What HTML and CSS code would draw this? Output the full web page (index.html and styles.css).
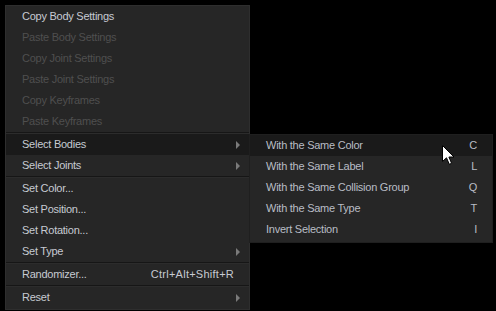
FILE: index.html
```html
<!DOCTYPE html>
<html lang="en">
<head>
  <meta charset="UTF-8" />
  <title>Context Menu</title>
  <link rel="stylesheet" href="styles.css">
</head>
<body>
  <div class="stage">
    <div class="menu main-menu">
      <div class="item">Copy Body Settings</div>
      <div class="item disabled">Paste Body Settings</div>
      <div class="item disabled">Copy Joint Settings</div>
      <div class="item disabled">Paste Joint Settings</div>
      <div class="item disabled">Copy Keyframes</div>
      <div class="item disabled">Paste Keyframes</div>
      <div class="sep"></div>
      <div class="item active has-sub">Select Bodies</div>
      <div class="item has-sub">Select Joints</div>
      <div class="sep"></div>
      <div class="item">Set Color...</div>
      <div class="item">Set Position...</div>
      <div class="item">Set Rotation...</div>
      <div class="item has-sub">Set Type</div>
      <div class="sep"></div>
      <div class="item"><span>Randomizer...</span><span class="key wide">Ctrl+Alt+Shift+R</span></div>
      <div class="sep"></div>
      <div class="item has-sub">Reset</div>
    </div>

    <div class="menu sub-menu">
      <div class="item active"><span>With the Same Color</span><span class="key">C</span></div>
      <div class="item"><span>With the Same Label</span><span class="key">L</span></div>
      <div class="item"><span>With the Same Collision Group</span><span class="key">Q</span></div>
      <div class="item"><span>With the Same Type</span><span class="key">T</span></div>
      <div class="item"><span>Invert Selection</span><span class="key">I</span></div>
    </div>

    <svg class="cursor" width="13" height="20" viewBox="0 0 13 20">
      <path d="M0.5 0.5 L0.5 16.5 L4.5 12.8 L7.3 19.3 L9.6 18.3 L6.9 12 L12 12 Z" fill="#fff" stroke="#000" stroke-width="1"/>
    </svg>
  </div>
</body>
</html>
```

FILE: styles.css
```css
body {
  margin: 0;
  background: #000;
  font-family: Tahoma, "Liberation Sans", Arial, sans-serif;
  font-size: 11px;
  letter-spacing: -0.25px;
}
.stage {
  position: relative;
  width: 496px;
  height: 311px;
  padding: 5px;
  box-sizing: border-box;
}

.menu {
  background: #262626;
  border: 1px solid #2e2e2e;
  box-sizing: border-box;
}
.main-menu {
  width: 245px;
  padding: 0 0 1px;
}
.item {
  height: 21px;
  line-height: 21px;
  padding: 0 16px 0 16px;
  color: #c6cad2;
  display: flex;
  justify-content: space-between;
  position: relative;
  white-space: nowrap;
}
.item.disabled {
  color: #4f4f4f;
}
.item.active {
  background: #1a1a1a;
}
.item .key {
  color: #c6cad2;
}
.main-menu .item .key {
  margin-right: -1px;
}
.key.wide {
  letter-spacing: 0.25px;
}
.has-sub::after {
  content: "";
  position: absolute;
  right: 9px;
  top: 7px;
  border-left: 4px solid #7a7a7a;
  border-top: 4px solid transparent;
  border-bottom: 4px solid transparent;
}
.sep {
  height: 1px;
  background: #161616;
  border-bottom: 1px solid #2c2c2c;
}

/* popup submenu */
.sub-menu {
  position: absolute;
  left: 249px;
  top: 134px;
  width: 244px;
  padding: 0 0 2px;
  border-color: #1f1f1f;
}
.sub-menu .item {
  color: #b9bdc5;
  padding-right: 15px;
}
.sub-menu .item .key {
  color: #b9bdc5;
}

.cursor {
  position: absolute;
  left: 442px;
  top: 145px;
}
```
